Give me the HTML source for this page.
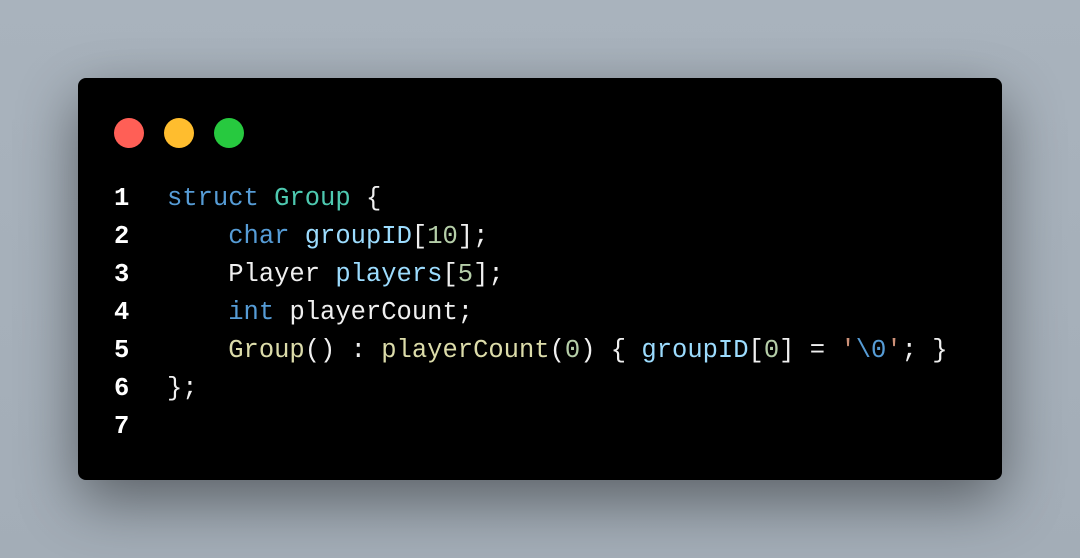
<!DOCTYPE html>
<html><head><meta charset="utf-8"><style>
html,body{margin:0;padding:0}
body{width:1080px;height:558px;background:linear-gradient(180deg,#a9b3bd,#a3adb7);position:relative;overflow:hidden}
.card{position:absolute;left:78px;top:78px;width:924px;height:402px;background:#000;border-radius:8px;box-shadow:0 20px 60px rgba(0,0,0,0.45)}
.dot{position:absolute;top:40px;width:30px;height:30px;border-radius:50%}
.code{position:absolute;left:0;top:102px;font-family:"Liberation Mono",monospace;font-size:25.5px;line-height:38px;color:#f0f0f0;white-space:pre}
.ln{position:absolute;left:36px;width:20px;text-align:left;font-weight:bold;color:#fff}
.tx{position:absolute;left:89px}
.k{color:#569cd6}.t{color:#4ec9b0}.v{color:#9cdcfe}.n{color:#b5cea8}.f{color:#dcdcaa}.s{color:#ce9178}
</style></head><body>
<div class="card">
<div class="dot" style="left:36px;background:#ff5f56"></div>
<div class="dot" style="left:86px;background:#ffbd2e"></div>
<div class="dot" style="left:136px;background:#27c93f"></div>
<div class="code">
<div class="ln" style="top:0">1</div><div class="tx" style="top:0"><span class="k">struct</span> <span class="t">Group</span> {</div>
<div class="ln" style="top:38px">2</div><div class="tx" style="top:38px">    <span class="k">char</span> <span class="v">groupID</span>[<span class="n">10</span>];</div>
<div class="ln" style="top:76px">3</div><div class="tx" style="top:76px">    Player <span class="v">players</span>[<span class="n">5</span>];</div>
<div class="ln" style="top:114px">4</div><div class="tx" style="top:114px">    <span class="k">int</span> playerCount;</div>
<div class="ln" style="top:152px">5</div><div class="tx" style="top:152px">    <span class="f">Group</span>() : <span class="f">playerCount</span>(<span class="n">0</span>) { <span class="v">groupID</span>[<span class="n">0</span>] = <span class="s">'</span><span class="k">\0</span><span class="s">'</span>; }</div>
<div class="ln" style="top:190px">6</div><div class="tx" style="top:190px">};</div>
<div class="ln" style="top:228px">7</div>
</div>
</div>
</body></html>
